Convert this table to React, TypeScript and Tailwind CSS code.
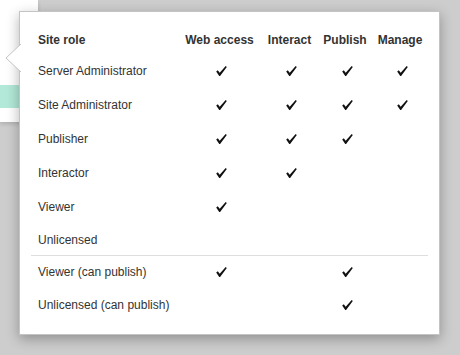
import React from 'react';

type Role = { name: string; perms: [boolean, boolean, boolean, boolean]; h: string };

const COLS = ['Web access', 'Interact', 'Publish', 'Manage'];

const mainRoles: Role[] = [
  { name: 'Server Administrator', perms: [true, true, true, true], h: 'h-[34px]' },
  { name: 'Site Administrator', perms: [true, true, true, true], h: 'h-[34px]' },
  { name: 'Publisher', perms: [true, true, true, false], h: 'h-[34px]' },
  { name: 'Interactor', perms: [true, true, false, false], h: 'h-[34px]' },
  { name: 'Viewer', perms: [true, false, false, false], h: 'h-[34px]' },
  { name: 'Unlicensed', perms: [false, false, false, false], h: 'h-[31px]' },
];

const publishRoles: Role[] = [
  { name: 'Viewer (can publish)', perms: [true, false, true, false], h: 'h-[32px]' },
  { name: 'Unlicensed (can publish)', perms: [false, false, true, false], h: 'h-[34px]' },
];

const grid = 'grid grid-cols-[147px_83px_57px_54px_56px] items-center';

const Check = () => (
  <svg width="11" height="10" viewBox="0 0 11 10" className="block">
    <path d="M0.2 5.4 L1.8 4.3 L3.7 6.7 L9.7 0.1 L10.8 0.9 L4.1 9.9 L3.2 9.9 Z" fill="#111" />
  </svg>
);

const RoleRow = ({ role }: { role: Role }) => (
  <div className={`${grid} ${role.h}`}>
    <div className="pl-[7px]">{role.name}</div>
    {role.perms.map((p, i) => (
      <div key={i} className="flex justify-center pl-[4px]">
        {p && <Check />}
      </div>
    ))}
  </div>
);

export default function App() {
  return (
    <div
      className="relative w-[460px] h-[355px] overflow-hidden bg-[#cdcdcd] text-[12px] text-[#333]"
      style={{ fontFamily: '"Liberation Sans", Arial, sans-serif' }}
    >
      {/* page behind the popover */}
      <div className="absolute left-0 top-0 w-[38px] h-[122px] bg-white pt-[85px] shadow-[0_2px_4px_rgba(0,0,0,0.15)]">
        <div className="h-[23px] bg-[#b3e9d8]" />
      </div>

      <div className="absolute left-[19px] top-[11px] w-[421px] h-[324px] bg-white border border-[#c4c4c4] shadow-[0_4px_12px_rgba(0,0,0,0.3)] px-[11px] pt-[13px]">
        {/* arrow */}
        <svg width="16" height="28" viewBox="0 0 16 28" className="absolute left-[-15px] top-[32px]">
          <polygon points="16,0 1,14 16,28" fill="#fff" />
          <polyline points="16,0 1,14 16,28" fill="none" stroke="#c4c4c4" strokeWidth="1" />
        </svg>

        <div className={`${grid} h-[29px] font-bold`}>
          <div className="pl-[7px]">Site role</div>
          {COLS.map(c => (
            <div key={c} className="text-center">{c}</div>
          ))}
        </div>

        {mainRoles.map(r => (
          <RoleRow key={r.name} role={r} />
        ))}

        <div className="border-t border-[#dedede]">
          {publishRoles.map(r => (
            <RoleRow key={r.name} role={r} />
          ))}
        </div>
      </div>
    </div>
  );
}
